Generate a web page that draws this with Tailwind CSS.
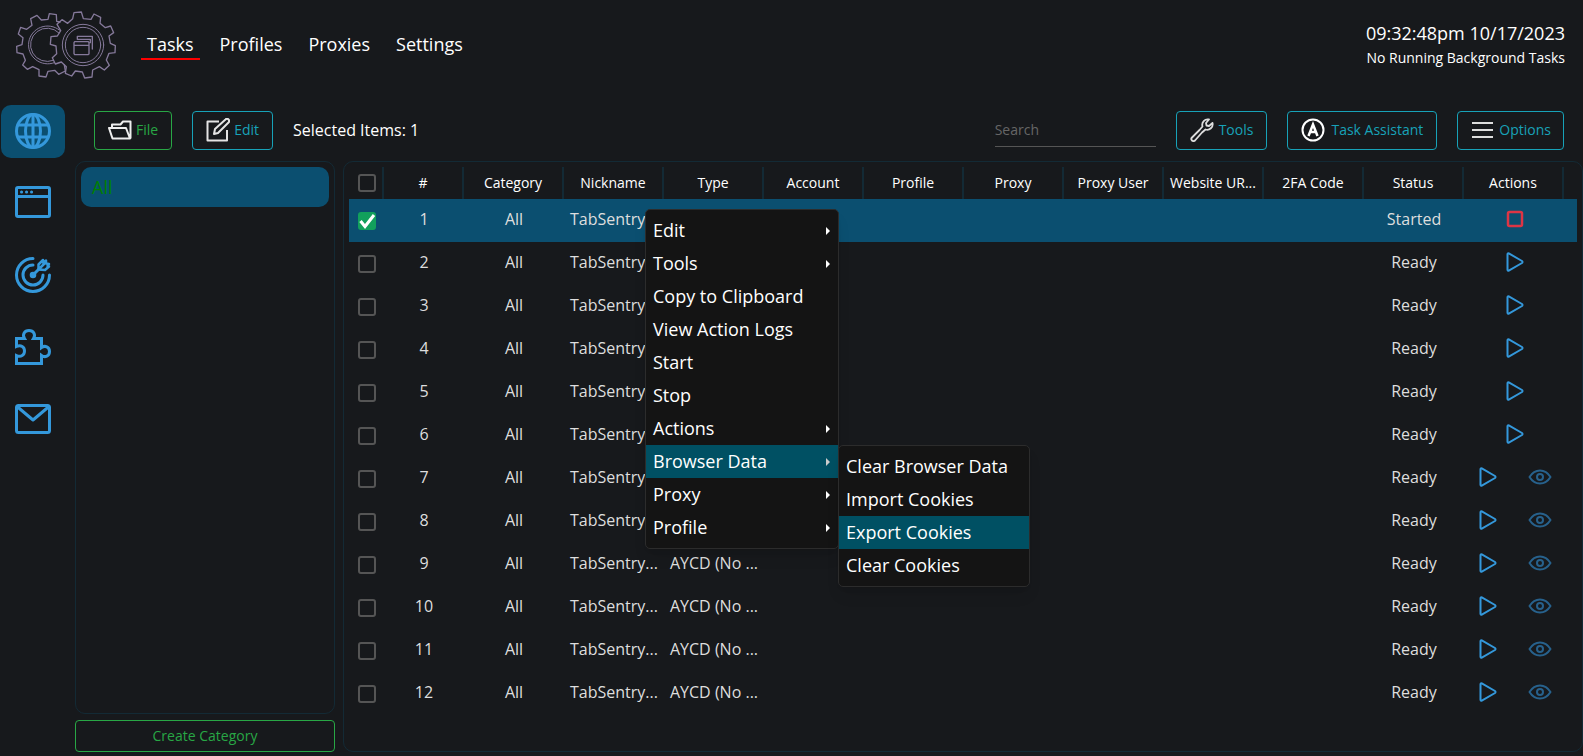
<!DOCTYPE html>
<html lang="en">
<head>
    <meta charset="UTF-8">
    <meta name="viewport" content="width=device-width, initial-scale=1.0">
    <title>Tasks</title>
    <script src="https://cdn.jsdelivr.net/npm/@tailwindcss/browser@4"></script>
</head>
<body class="bg-[#17191c] text-white font-['Open_Sans',sans-serif] h-screen flex flex-col overflow-hidden">

    <!-- Icons used by the table rows -->
    <svg class="hidden">
        <symbol id="icon-play" viewBox="0 0 18 20">
            <path d="M1.5 2.2v15.6c0 .8.7 1.1 1.3.8L16 11c.7-.5.7-1.500 0-2L2.800 1.400c-.6-.3-1.300 0-1.300.8z" fill="none" stroke="#3498db" stroke-width="2" stroke-linejoin="round"/>
        </symbol>
        <symbol id="icon-stop" viewBox="0 0 18 18">
            <rect x="2" y="2" width="14" height="14" rx="1.500" fill="none" stroke="#dc3545" stroke-width="2.500"/>
        </symbol>
        <symbol id="icon-eye" viewBox="0 0 24 16">
            <path d="M1.500 8C4 4 7.500 1.500 12 1.500S20 4 22.500 8C20 12 16.500 14.500 12 14.500S4 12 1.500 8z" fill="none" stroke="#27618c" stroke-width="2" stroke-linejoin="round"/>
            <circle cx="12" cy="8" r="3" fill="none" stroke="#27618c" stroke-width="2"/>
        </symbol>
    </svg>

    <!-- Header -->
    <header class="flex items-center h-[90px] pl-4 pr-[18px] shrink-0">
        <svg class="w-[100px] h-[68px] mr-[25px]" viewBox="48 33 300 204" fill="none" stroke="#85799a" stroke-width="4" stroke-linejoin="round" stroke-linecap="round">
            <path d="M180 66L170 64 169 44 148 41 144 58 124 60 111 46 92 56 96 76 80 88 62 82 55 102 69 113 66 134 50 139 51 158 69 162 76 181 68 195 82 208 98 200 117 209 117 228 138 231 144 214 164 211 176 223 196 213 193 195"/>
            <path d="M222 38L244 36 250 56 273 58 282 42 302 52 300 70 316 83 332 78 341 98 327 108 331 130 346 137 345 158 327 160 319 180 328 196 313 210 298 200 278 210 276 231 254 234 247 216 226 213 215 228 196 220 199 200 184 186 166 192 157 173 170 161 168 138 151 133 153 110 172 108 182 92 171 73 186 59 203 70 218 56z"/>
            <path stroke-width="3" d="M178 90A57 57 0 1 0 163 188M177 99A50 50 0 1 0 160 181"/>
            <circle stroke-width="3" cx="249" cy="135" r="62"/>
            <circle stroke-width="3" cx="249" cy="135" r="53"/>
            <path d="M224 125H265L267 128V162L264 164H224L222 161V128zM222 136H267M232 118V109H277V147M232 118H271V128"/>
        </svg>
        <nav class="flex gap-[14px] text-lg leading-7">
            <a href="#" class="px-[6px] border-b-2 border-[#f00]">Tasks</a>
            <a href="#" class="px-[6px] border-b-2 border-transparent">Profiles</a>
            <a href="#" class="px-[6px] border-b-2 border-transparent">Proxies</a>
            <a href="#" class="px-[6px] border-b-2 border-transparent">Settings</a>
        </nav>
        <div class="ml-auto text-right">
            <p class="text-lg leading-[26px]">09:32:48pm 10/17/2023</p>
            <p class="text-sm leading-6">No Running Background Tasks</p>
        </div>
    </header>

    <div class="flex flex-1 min-h-0 pt-[15px]">
        <!-- Sidebar -->
        <aside class="flex flex-col gap-[19px] w-[64px] ml-px shrink-0">
            <button aria-label="Browser" class="h-[53px] pb-[2px] rounded-[10px] bg-[#0b4f70] flex items-center justify-center">
                <svg class="size-9" viewBox="0 0 36 36" fill="none" stroke="#3498db" stroke-width="3"><circle cx="18" cy="18" r="16.500"/><ellipse cx="18" cy="18" rx="7.500" ry="16.500"/><path d="M18 1v34M3 12h30M3 24h30"/></svg>
            </button>
            <button aria-label="Windows" class="h-[53px] pb-[2px] rounded-[10px] flex items-center justify-center">
                <svg class="size-9" viewBox="0 0 36 36" fill="none" stroke="#3498db" stroke-width="3"><rect x="1.500" y="2.500" width="33" height="29" rx="1.500"/><path d="M1.500 11.500h33"/><path d="M6.500 7h.1M11.500 7h.1M16.500 7h.1" stroke-linecap="round"/></svg>
            </button>
            <button aria-label="Targets" class="h-[53px] pb-[2px] rounded-[10px] flex items-center justify-center">
                <svg class="size-9" viewBox="0 0 36 36" fill="none" stroke="#3498db" stroke-width="3" stroke-linecap="round" stroke-linejoin="round"><path d="M18 1.500A16.500 16.500 0 1 0 34.500 18M18 8a10 10 0 1 0 10 10"/><circle cx="18" cy="18" r="1.800" fill="#3498db"/><path d="M18 18l6-6" /><path d="M23.500 12.500V7.500L28 3v2.500l3-2v3l3 .5-1.500 2 1.500.5-4 3.500zM23.500 12.500l6-6" stroke-width="2.500"/></svg>
            </button>
            <button aria-label="Extensions" class="h-[53px] pb-[2px] rounded-[10px] flex items-center justify-center">
                <svg class="size-9" viewBox="0 0 36 36" fill="none" stroke="#3498db" stroke-width="3"><path d="M1.500 9.500H9.500C7 5.500 9.500 1.500 14 1.500S21 5.500 18.500 9.500H26.500V18.500C30 16 34.500 18 34.500 22.500S30 29 26.500 26.500V34.500H1.500V26.500C6 28.500 9.500 26 9.500 22S6 15.500 1.500 17.500z"/></svg>
            </button>
            <button aria-label="Mail" class="h-[53px] pb-[2px] rounded-[10px] flex items-center justify-center">
                <svg class="size-9" viewBox="0 0 36 36" fill="none" stroke="#3498db" stroke-width="3" stroke-linejoin="round"><rect x="1.500" y="4.500" width="33" height="27" rx="2"/><path d="M2 5.500L18 19 34 5.500"/></svg>
            </button>
        </aside>

        <main class="flex flex-col flex-1 min-w-0 pl-[10px] pb-1">
            <!-- Toolbar -->
            <div class="flex items-center h-[50px] mb-[6px] pl-[19px] pr-[19px] text-sm shrink-0">
                <button class="flex items-center gap-1 h-[39px] px-[13px] mr-5 border border-[#28a745] rounded text-[#28a745]">
                    <svg class="w-6 h-5" viewBox="0 0 24 20" fill="none" stroke="#eee" stroke-width="2" stroke-linejoin="round"><path d="M4 7V4.500h8.500L15 1.500h7.500V18.500M1 8h17L22 18.500H4.500z"/></svg>
                    File
                </button>
                <button class="flex items-center gap-1 h-[39px] px-[13px] mr-5 border border-[#17a2b8] rounded text-[#17a2b8]">
                    <svg class="size-6" viewBox="0 0 24 24" fill="none" stroke="#e4e4e4" stroke-width="2" stroke-linejoin="round"><path d="M13 3.500H1.500V22.500H21V12"/><path d="M8 16l1-5L19.500 1.500a2 2 0 0 1 3 3L12 15z"/></svg>
                    Edit
                </button>
                <span class="text-base">Selected Items: 1</span>
                <input type="search" aria-label="Search" placeholder="Search" class="ml-auto mr-5 w-[161px] h-[34px] border-b border-[#555] placeholder:text-[#666] outline-none">
                <button class="flex items-center gap-[5px] h-[39px] px-[13px] mr-5 border border-[#17a2b8] rounded text-[#17a2b8]">
                    <svg class="size-6" viewBox="0 0 24 24" fill="none" stroke="#ddd" stroke-width="1.800" stroke-linejoin="round"><path d="M19 1.500a5.500 5.500 0 0 0-6.500 7L9.500 12 2 19.500a2 2 0 0 0 3 3L12 14.500l3.500-3a5.500 5.500 0 0 0 7-6.500L19 8l-2.500-.500L16 5z"/></svg>
                    Tools
                </button>
                <button class="flex items-center gap-[6px] h-[39px] px-[13px] mr-5 border border-[#17a2b8] rounded text-[#17a2b8]">
                    <svg class="size-6" viewBox="0 0 24 24" fill="none" stroke="#fff" stroke-width="2"><circle cx="12" cy="12" r="10.500"/><path d="M7.500 18L12 6.500 16.500 18M9.500 14h5" stroke-width="2.500"/></svg>
                    Task Assistant
                </button>
                <button class="flex items-center gap-[5px] h-[39px] px-3 border border-[#17a2b8] rounded text-[#17a2b8]">
                    <svg class="size-6" viewBox="0 0 24 24" stroke="#ddd" stroke-width="2"><path d="M2 5h21M2 12h21M2 19h21"/></svg>
                    Options
                </button>
            </div>

            <div class="flex flex-1 min-h-0 gap-2">
                <!-- Categories -->
                <section class="flex flex-col gap-[6px] w-[260px] shrink-0">
                    <ul class="flex-1 p-[5px] border border-[#132a35] rounded-[10px]">
                        <li class="flex items-center h-10 px-[11px] rounded-[10px] bg-[#0b4f70] text-[#008000] text-lg">All</li>
                    </ul>
                    <button class="h-8 border border-[#28a745] rounded text-[#28a745] text-sm">Create Category</button>
                </section>

                <!-- Tasks table -->
                <section class="flex-1 min-w-0 p-[5px] border border-[#132a35] rounded-[10px]">
                    <table class="w-full table-fixed border-separate border-spacing-0 text-center">
                        <colgroup>
                            <col class="w-[35px]"><col class="w-20">
                            <col class="w-[100px]"><col class="w-[100px]"><col class="w-[100px]"><col class="w-[100px]">
                            <col class="w-[100px]"><col class="w-[100px]"><col class="w-[100px]"><col class="w-[100px]">
                            <col class="w-[100px]"><col class="w-[100px]"><col class="w-[100px]"><col>
                        </colgroup>
                        <thead class="text-sm">
                            <tr class="h-8">
                                <th class="p-0 border-r-2 border-[#132a35]"><input type="checkbox" aria-label="Select all" class="appearance-none block ml-[9px] size-[18px] border-2 border-[#555] rounded-[3px]"></th>
                                <th class="p-0 border-r-2 border-[#132a35] font-medium">#</th>
                                <th class="p-0 border-r-2 border-[#132a35] font-medium">Category</th>
                                <th class="p-0 border-r-2 border-[#132a35] font-medium">Nickname</th>
                                <th class="p-0 border-r-2 border-[#132a35] font-medium">Type</th>
                                <th class="p-0 border-r-2 border-[#132a35] font-medium">Account</th>
                                <th class="p-0 border-r-2 border-[#132a35] font-medium">Profile</th>
                                <th class="p-0 border-r-2 border-[#132a35] font-medium">Proxy</th>
                                <th class="p-0 border-r-2 border-[#132a35] font-medium">Proxy User</th>
                                <th class="p-0 border-r-2 border-[#132a35] font-medium whitespace-nowrap">Website UR...</th>
                                <th class="p-0 border-r-2 border-[#132a35] font-medium">2FA Code</th>
                                <th class="p-0 border-r-2 border-[#132a35] font-medium">Status</th>
                                <th class="p-0 border-r-2 border-[#132a35] font-medium">Actions</th>
                                <td></td>
                            </tr>
                        </thead>
                        <tbody id="task_rows" class="text-base text-[#dedede]"></tbody>
                    </table>
                </section>
            </div>
        </main>
    </div>

    <!-- Context menu -->
    <ul class="absolute left-[645px] top-[209px] w-[194px] py-1 bg-[#141414] border border-[#2c2c2c] rounded-[5px] shadow-lg text-lg leading-[33px]">
        <li><button class="flex w-full items-center justify-between pl-[7px] pr-2">Edit <svg class="w-1 h-2" viewBox="0 0 4 8" fill="#fff"><path d="M0 0l4 4-4 4z"/></svg></button></li>
        <li><button class="flex w-full items-center justify-between pl-[7px] pr-2">Tools <svg class="w-1 h-2" viewBox="0 0 4 8" fill="#fff"><path d="M0 0l4 4-4 4z"/></svg></button></li>
        <li><button class="flex w-full items-center justify-between pl-[7px] pr-2">Copy to Clipboard</button></li>
        <li><button class="flex w-full items-center justify-between pl-[7px] pr-2">View Action Logs</button></li>
        <li><button class="flex w-full items-center justify-between pl-[7px] pr-2">Start</button></li>
        <li><button class="flex w-full items-center justify-between pl-[7px] pr-2">Stop</button></li>
        <li><button class="flex w-full items-center justify-between pl-[7px] pr-2">Actions <svg class="w-1 h-2" viewBox="0 0 4 8" fill="#fff"><path d="M0 0l4 4-4 4z"/></svg></button></li>
        <li class="relative">
            <button class="flex w-full items-center justify-between pl-[7px] pr-2 bg-[#005063]">Browser Data <svg class="w-1 h-2" viewBox="0 0 4 8" fill="#ccc"><path d="M0 0l4 4-4 4z"/></svg></button>
            <ul class="absolute left-full top-0 w-[192px] py-1 bg-[#141414] border border-[#2c2c2c] rounded-[5px] shadow-lg">
                <li><button class="w-full text-left pl-[7px] whitespace-nowrap">Clear Browser Data</button></li>
                <li><button class="w-full text-left pl-[7px] whitespace-nowrap">Import Cookies</button></li>
                <li><button class="w-full text-left pl-[7px] whitespace-nowrap bg-[#005063]">Export Cookies</button></li>
                <li><button class="w-full text-left pl-[7px] whitespace-nowrap">Clear Cookies</button></li>
            </ul>
        </li>
        <li><button class="flex w-full items-center justify-between pl-[7px] pr-2">Proxy <svg class="w-1 h-2" viewBox="0 0 4 8" fill="#fff"><path d="M0 0l4 4-4 4z"/></svg></button></li>
        <li><button class="flex w-full items-center justify-between pl-[7px] pr-2">Profile <svg class="w-1 h-2" viewBox="0 0 4 8" fill="#fff"><path d="M0 0l4 4-4 4z"/></svg></button></li>
    </ul>

    <script>
        const playButton = '<button aria-label="Start"><svg class="w-[18px] h-5 block"><use href="#icon-play"/></svg></button>';
        const stopButton = '<button aria-label="Stop"><svg class="size-[18px] block"><use href="#icon-stop"/></svg></button>';
        const viewButton = '<button aria-label="View"><svg class="w-6 h-4 block"><use href="#icon-eye"/></svg></button>';
        const checkMark = '<svg class="absolute inset-0 size-[18px] pointer-events-none" viewBox="0 0 18 18" fill="none" stroke="#fff" stroke-width="3"><path d="M2.500 9L7 14.500 16 3"/></svg>';

        let rows = '';
        for (let i = 1; i <= 12; i++) {
            const started = i === 1;
            let actions = started ? stopButton : playButton;
            if (i >= 7) actions += viewButton;
            rows += `
                <tr class="h-[43px] ${started ? 'bg-[#0b4f70]' : ''}">
                    <td class="p-0"><div class="relative size-[18px] ml-[9px]"><input type="checkbox" aria-label="Select task ${i}" ${started ? 'checked' : ''} class="appearance-none block size-[18px] border-2 border-[#555] rounded-[3px] checked:bg-[#12a05c] checked:border-[#12a05c]">${started ? checkMark : ''}</div></td>
                    <td class="p-0 pb-[3px]">${i}</td>
                    <td class="p-0 pb-[3px]">All</td>
                    <td class="p-0 pb-[3px] whitespace-nowrap">TabSentry...</td>
                    <td class="p-0 pb-[3px] whitespace-nowrap">AYCD (No ...</td>
                    <td></td><td></td><td></td><td></td><td></td><td></td>
                    <td class="p-0 pb-[3px]">${started ? 'Started' : 'Ready'}</td>
                    <td class="p-0 pb-[3px]"><div class="flex items-center justify-center gap-[31px] pl-[2px]">${actions}</div></td>
                    <td></td>
                </tr>`;
        }
        document.getElementById('task_rows').innerHTML = rows;
    </script>
</body>
</html>
